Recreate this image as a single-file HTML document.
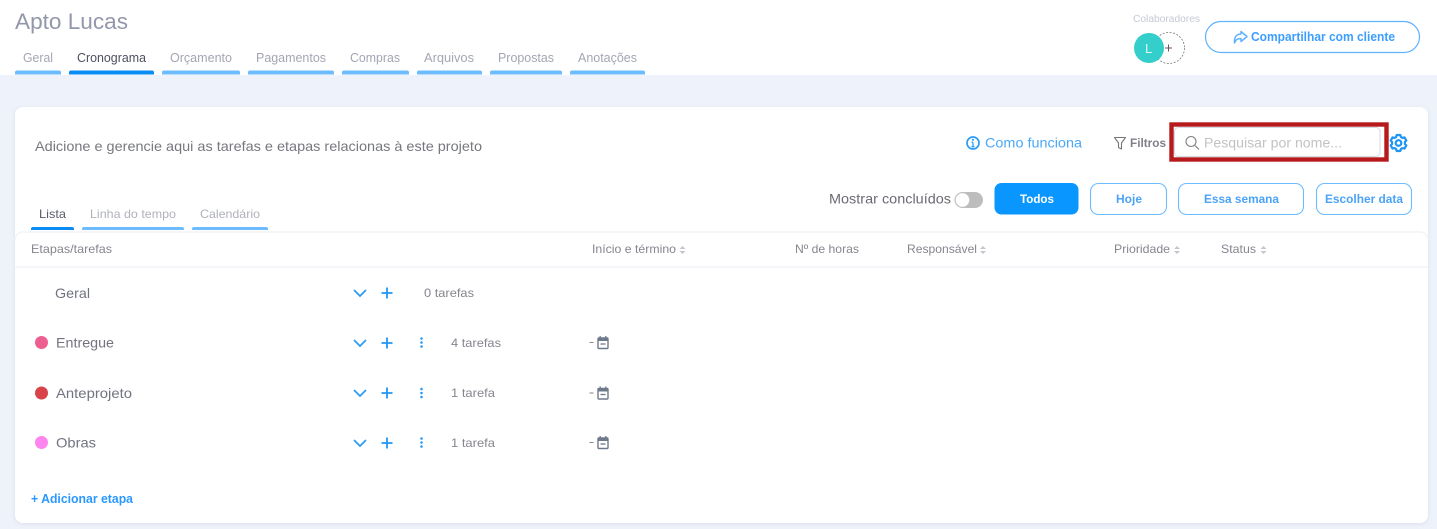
<!DOCTYPE html>
<html lang="pt-BR"><head><meta charset="utf-8"><title>Apto Lucas</title>
<style>
html,body{margin:0;padding:0;width:1437px;height:529px;overflow:hidden;background:#eef2fa}
svg{display:block}
text{font-family:"Liberation Sans",sans-serif}
</style></head><body>
<svg width="1437" height="529" viewBox="0 0 1437 529" xmlns="http://www.w3.org/2000/svg">
<defs>
<filter id="s" x="-5%" y="-5%" width="110%" height="110%"><feDropShadow dx="0" dy="1" stdDeviation="2" flood-color="#9aa5c5" flood-opacity=".25"/></filter>
<g id="sort"><path d="M-3 -1 L0 -4 L3 -1Z M-3 1 L0 4 L3 1Z" fill="#c3c6cf"/></g>
<g id="chev"><path d="M-6 -3 L0 3 L6 -3" fill="none" stroke="#2a9bf5" stroke-width="1.7"/></g>
<g id="plus"><path d="M-5.500 0H5.500M0 -5.500V5.500" fill="none" stroke="#1f96f5" stroke-width="1.800"/></g>
<g id="keb"><circle cy="-4" r="1.300" fill="#2a9bf5"/><circle r="1.300" fill="#2a9bf5"/><circle cy="4" r="1.300" fill="#2a9bf5"/></g>
<g id="cal"><rect x="-5" y="-4.500" width="10" height="10.500" rx="1" fill="none" stroke="#6e7a8a" stroke-width="1.400"/><path d="M-5 -4H5V-1.500H-5Z" fill="#6e7a8a"/><path d="M-2.800 -6.500V-4M2.800 -6.500V-4" stroke="#6e7a8a" stroke-width="1.300"/><path d="M-2.500 1.500H2.500" stroke="#6e7a8a" stroke-width="1.300"/></g>
</defs>

<rect width="1437" height="529" fill="#eef2fa"/>
<rect width="1437" height="75" fill="#fff"/>

<text x="15" y="29" font-size="22" fill="#9397ab" textLength="113" lengthAdjust="spacingAndGlyphs">Apto Lucas</text>

<g font-size="12.500" fill="#a3a6b3">
<text x="23" y="62" textLength="30" lengthAdjust="spacingAndGlyphs">Geral</text>
<text x="77" y="62" textLength="69" lengthAdjust="spacingAndGlyphs" fill="#4d5060">Cronograma</text>
<text x="170" y="62" textLength="62" lengthAdjust="spacingAndGlyphs">Orçamento</text>
<text x="256" y="62" textLength="70" lengthAdjust="spacingAndGlyphs">Pagamentos</text>
<text x="350" y="62" textLength="50" lengthAdjust="spacingAndGlyphs">Compras</text>
<text x="424" y="62" textLength="50" lengthAdjust="spacingAndGlyphs">Arquivos</text>
<text x="498" y="62" textLength="56" lengthAdjust="spacingAndGlyphs">Propostas</text>
<text x="578" y="62" textLength="59" lengthAdjust="spacingAndGlyphs">Anotações</text>
</g>
<g fill="#6cbcff">
<path d="M15 74.500v-2a2 2 0 0 1 2-2h42a2 2 0 0 1 2 2v2z"/>
<path fill="#0a8cf5" d="M69 74.500v-2a2 2 0 0 1 2-2h81a2 2 0 0 1 2 2v2z"/>
<path d="M162 74.500v-2a2 2 0 0 1 2-2h74a2 2 0 0 1 2 2v2z"/>
<path d="M248 74.500v-2a2 2 0 0 1 2-2h82a2 2 0 0 1 2 2v2z"/>
<path d="M342 74.500v-2a2 2 0 0 1 2-2h63a2 2 0 0 1 2 2v2z"/>
<path d="M417 74.500v-2a2 2 0 0 1 2-2h61a2 2 0 0 1 2 2v2z"/>
<path d="M490 74.500v-2a2 2 0 0 1 2-2h68a2 2 0 0 1 2 2v2z"/>
<path d="M570 74.500v-2a2 2 0 0 1 2-2h71a2 2 0 0 1 2 2v2z"/>
</g>

<text x="1133" y="22" font-size="10" fill="#c6c9d6" textLength="67" lengthAdjust="spacingAndGlyphs">Colaboradores</text>
<circle cx="1169" cy="48" r="15.500" fill="#fff" stroke="#777" stroke-width=".8" stroke-dasharray="2 1.500"/>
<path d="M1165 48H1172M1168.500 44.500V51.500" stroke="#6a5068" stroke-width="1"/>
<circle cx="1149" cy="48" r="15" fill="#34cfcb"/>
<text x="1145" y="53" font-size="13" fill="#dff7f6">L</text>
<rect x="1205.500" y="21.500" width="214" height="31" rx="15.500" fill="#fff" stroke="#5fb2ff" stroke-width="1.200"/>
<path d="M1241 31.500V34C1237 34 1234 36.500 1234.500 43C1235.800 39.500 1237.500 38.500 1241 38.500V41.500L1247 36.500Z" fill="none" stroke="#5fb2ff" stroke-width="1.500" stroke-linejoin="round"/>
<text x="1251" y="41" font-size="12.500" font-weight="700" fill="#3d9eff" textLength="144" lengthAdjust="spacingAndGlyphs">Compartilhar com cliente</text>

<rect x="15" y="107" width="1413" height="416" rx="8" fill="#fff" filter="url(#s)"/>

<text x="35" y="151" font-size="14" fill="#77787f" textLength="447" lengthAdjust="spacingAndGlyphs">Adicione e gerencie aqui as tarefas e etapas relacionas à este projeto</text>

<circle cx="973" cy="143" r="6" fill="none" stroke="#2d9cf5" stroke-width="1.700"/>
<path d="M973 142.500V146.500M971.500 146.700H974.500M971.500 142.300H973" stroke="#2d9cf5" stroke-width="1.300"/><circle cx="973" cy="139.800" r="1.100" fill="#2d9cf5"/>
<text x="985" y="147.500" font-size="14" fill="#4aa8f8" textLength="97" lengthAdjust="spacingAndGlyphs">Como funciona</text>

<path d="M1114.500 137.500H1125.500L1121.500 143V149L1118.500 147.500V143Z" fill="none" stroke="#777" stroke-width="1.100" stroke-linejoin="round"/>
<text x="1130" y="147" font-size="12" font-weight="700" fill="#808188" textLength="36" lengthAdjust="spacingAndGlyphs">Filtros</text>

<rect x="1171.500" y="124.500" width="215" height="35" fill="#fff" stroke="#b71a1c" stroke-width="4.400"/>
<rect x="1174.500" y="127.500" width="205.500" height="29" rx="4" fill="#fff" stroke="#d5d9e4" stroke-width="1"/>
<circle cx="1191" cy="141.500" r="5" fill="none" stroke="#808080" stroke-width="1.100"/>
<path d="M1195 145.500L1199 149.500" stroke="#808080" stroke-width="1.200"/>
<text x="1204" y="147.500" font-size="14" fill="#c2c2c2" textLength="138" lengthAdjust="spacingAndGlyphs">Pesquisar por nome...</text>

<g transform="translate(1398.500 143)" fill="none" stroke="#1f96f5" stroke-width="2.200" stroke-linejoin="round">
<circle r="2.800"/>
<path d="M-1.800 -8H1.800L2.400 -6L4 -5.100L6 -5.600L7.800 -2.400L6.400 -1V1L7.800 2.400L6 5.600L4 5.100L2.400 6L1.800 8H-1.800L-2.400 6L-4 5.100L-6 5.600L-7.800 2.400L-6.400 1V-1L-7.800 -2.400L-6 -5.600L-4 -5.100L-2.400 -6Z"/>
</g>

<text x="829" y="203.500" font-size="14" fill="#6a6b72" textLength="122" lengthAdjust="spacingAndGlyphs">Mostrar concluídos</text>
<rect x="954.500" y="192" width="28.500" height="16" rx="8" fill="#bdbdbd"/>
<circle cx="962.500" cy="200" r="7" fill="#fff" stroke="#c9c9c9" stroke-width=".6"/>

<rect x="994.500" y="183" width="84" height="31.500" rx="7" fill="#0a96ff"/>
<text x="1020" y="203" font-size="12" font-weight="700" fill="#fff" textLength="34" lengthAdjust="spacingAndGlyphs">Todos</text>
<g fill="#fff" stroke="#6cbcff" stroke-width="1.100">
<rect x="1090.500" y="183.500" width="76" height="31" rx="8"/>
<rect x="1178.500" y="183.500" width="125" height="31" rx="8"/>
<rect x="1316.500" y="183.500" width="95" height="31" rx="8"/>
</g>
<g font-size="12" font-weight="700" fill="#4ba3f7">
<text x="1116" y="203" textLength="26" lengthAdjust="spacingAndGlyphs">Hoje</text>
<text x="1204" y="203" textLength="75" lengthAdjust="spacingAndGlyphs">Essa semana</text>
<text x="1325" y="203" textLength="78" lengthAdjust="spacingAndGlyphs">Escolher data</text>
</g>

<g font-size="12">
<text x="39" y="218" fill="#5a5c6c" textLength="27" lengthAdjust="spacingAndGlyphs">Lista</text>
<text x="90" y="218" fill="#b0b2bb" textLength="86" lengthAdjust="spacingAndGlyphs">Linha do tempo</text>
<text x="200" y="218" fill="#b0b2bb" textLength="60" lengthAdjust="spacingAndGlyphs">Calendário</text>
</g>
<path d="M31 230v-1a2 2 0 0 1 2-2h39a2 2 0 0 1 2 2v1z" fill="#0a8cf5"/>
<path d="M82 230v-1a2 2 0 0 1 2-2h98a2 2 0 0 1 2 2v1z" fill="#6cbcff"/>
<path d="M192 230v-1a2 2 0 0 1 2-2h72a2 2 0 0 1 2 2v1z" fill="#6cbcff"/>

<path d="M15 240a8 8 0 0 1 8-8H1420a8 8 0 0 1 8 8" fill="none" stroke="#f3f4f8" stroke-width="1.500"/>
<path d="M15 267H1428" stroke="#f3f4f8" stroke-width="1.500"/>

<g font-size="12" fill="#85868e">
<text x="31" y="253" textLength="81" lengthAdjust="spacingAndGlyphs">Etapas/tarefas</text>
<text x="592" y="253" textLength="84" lengthAdjust="spacingAndGlyphs">Início e término</text>
<text x="795" y="253" textLength="64" lengthAdjust="spacingAndGlyphs">Nº de horas</text>
<text x="907" y="253" textLength="70" lengthAdjust="spacingAndGlyphs">Responsável</text>
<text x="1114" y="253" textLength="56" lengthAdjust="spacingAndGlyphs">Prioridade</text>
<text x="1221" y="253" textLength="35" lengthAdjust="spacingAndGlyphs">Status</text>
</g>
<use href="#sort" x="682.500" y="250"/><use href="#sort" x="983" y="250"/><use href="#sort" x="1177" y="250"/><use href="#sort" x="1263.500" y="250"/>

<g font-size="14" fill="#71737f">
<text x="55" y="298" textLength="35" lengthAdjust="spacingAndGlyphs">Geral</text>
<text x="56" y="347.500" textLength="58" lengthAdjust="spacingAndGlyphs">Entregue</text>
<text x="56" y="398" textLength="76" lengthAdjust="spacingAndGlyphs">Anteprojeto</text>
<text x="56" y="447.500" textLength="40" lengthAdjust="spacingAndGlyphs">Obras</text>
</g>
<circle cx="41.500" cy="342.500" r="6.500" fill="#ec5f90"/>
<circle cx="41.500" cy="393" r="6.500" fill="#d9434a"/>
<circle cx="41.500" cy="442.500" r="6.500" fill="#ff85ee"/>

<use href="#chev" x="360" y="293"/><use href="#plus" x="387" y="293"/>
<use href="#chev" x="360" y="343"/><use href="#plus" x="387" y="343"/><use href="#keb" x="421.500" y="342.500"/>
<use href="#chev" x="360" y="393"/><use href="#plus" x="387" y="393"/><use href="#keb" x="421.500" y="393"/>
<use href="#chev" x="360" y="443"/><use href="#plus" x="387" y="443"/><use href="#keb" x="421.500" y="442.500"/>

<g font-size="12" fill="#85868e">
<text x="424" y="297" textLength="50" lengthAdjust="spacingAndGlyphs">0 tarefas</text>
<text x="451" y="347" textLength="50" lengthAdjust="spacingAndGlyphs">4 tarefas</text>
<text x="451" y="397" textLength="44" lengthAdjust="spacingAndGlyphs">1 tarefa</text>
<text x="451" y="447" textLength="44" lengthAdjust="spacingAndGlyphs">1 tarefa</text>
</g>
<g stroke="#85868e" stroke-width="1.100"><path d="M589.500 342.500H593.500M589.500 393H593.500M589.500 442.500H593.500"/></g>
<use href="#cal" x="603" y="342.500"/><use href="#cal" x="603" y="393"/><use href="#cal" x="603" y="442.500"/>

<text x="31" y="503" font-size="12.500" font-weight="700" fill="#2a98ff" textLength="102" lengthAdjust="spacingAndGlyphs">+ Adicionar etapa</text>
</svg>
</body></html>
